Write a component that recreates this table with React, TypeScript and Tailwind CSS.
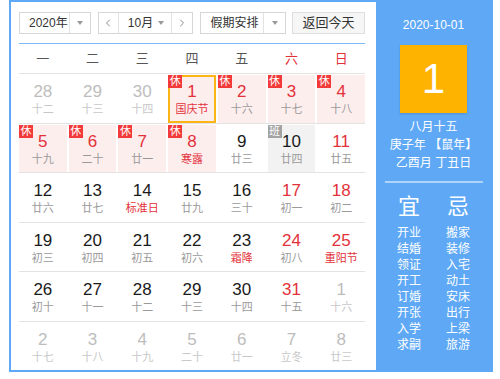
import React from 'react';
import { ChevronLeft, ChevronRight } from 'lucide-react';

type Day = {
  n: number;
  lunar: string;
  kind?: 'other' | 'red' | 'normal';
  lunarRed?: boolean;
  badge?: '休' | '班';
  today?: boolean;
};

const WEEK = ['一', '二', '三', '四', '五', '六', '日'];

const ROWS: Day[][] = [
  [
    { n: 28, lunar: '十二', kind: 'other' },
    { n: 29, lunar: '十三', kind: 'other' },
    { n: 30, lunar: '十四', kind: 'other' },
    { n: 1, lunar: '国庆节', kind: 'red', lunarRed: true, badge: '休', today: true },
    { n: 2, lunar: '十六', kind: 'red', badge: '休' },
    { n: 3, lunar: '十七', kind: 'red', badge: '休' },
    { n: 4, lunar: '十八', kind: 'red', badge: '休' },
  ],
  [
    { n: 5, lunar: '十九', kind: 'red', badge: '休' },
    { n: 6, lunar: '二十', kind: 'red', badge: '休' },
    { n: 7, lunar: '廿一', kind: 'red', badge: '休' },
    { n: 8, lunar: '寒露', kind: 'red', lunarRed: true, badge: '休' },
    { n: 9, lunar: '廿三' },
    { n: 10, lunar: '廿四', badge: '班' },
    { n: 11, lunar: '廿五', kind: 'red' },
  ],
  [
    { n: 12, lunar: '廿六' },
    { n: 13, lunar: '廿七' },
    { n: 14, lunar: '标准日', lunarRed: true },
    { n: 15, lunar: '廿九' },
    { n: 16, lunar: '三十' },
    { n: 17, lunar: '初一', kind: 'red' },
    { n: 18, lunar: '初二', kind: 'red' },
  ],
  [
    { n: 19, lunar: '初三' },
    { n: 20, lunar: '初四' },
    { n: 21, lunar: '初五' },
    { n: 22, lunar: '初六' },
    { n: 23, lunar: '霜降', lunarRed: true },
    { n: 24, lunar: '初八', kind: 'red' },
    { n: 25, lunar: '重阳节', kind: 'red', lunarRed: true },
  ],
  [
    { n: 26, lunar: '初十' },
    { n: 27, lunar: '十一' },
    { n: 28, lunar: '十二' },
    { n: 29, lunar: '十三' },
    { n: 30, lunar: '十四' },
    { n: 31, lunar: '十五', kind: 'red' },
    { n: 1, lunar: '十六', kind: 'other' },
  ],
  [
    { n: 2, lunar: '十七', kind: 'other' },
    { n: 3, lunar: '十八', kind: 'other' },
    { n: 4, lunar: '十九', kind: 'other' },
    { n: 5, lunar: '二十', kind: 'other' },
    { n: 6, lunar: '廿一', kind: 'other' },
    { n: 7, lunar: '立冬', kind: 'other' },
    { n: 8, lunar: '廿三', kind: 'other' },
  ],
];

const YI = ['开业', '结婚', '领证', '开工', '订婚', '开张', '入学', '求嗣'];
const JI = ['搬家', '装修', '入宅', '动土', '安床', '出行', '上梁', '旅游'];

const Arrow = () => (
  <span className="h-0 w-0 border-x-[3px] border-t-[4px] border-x-transparent border-t-[#9a9a9a]" />
);

const Cell = ({ d }: { d: Day }) => {
  const bg = d.badge === '休' ? 'bg-[#fdeeee]' : d.badge === '班' ? 'bg-[#f2f2f2]' : '';
  const num =
    d.kind === 'other' ? 'text-[#bdbdbd]' : d.kind === 'red' ? 'text-[#e3313a]' : 'text-[#1a1a1a]';
  const lunar = d.kind === 'other'
    ? 'text-[#c8c8c8]'
    : d.lunarRed
      ? 'text-[#e3313a]'
      : 'text-[#9a9a9a]';

  return (
    <div
      className={`relative flex flex-col items-center ${bg} ${
        d.today ? 'border-2 border-[#fdb515] pt-[5px]' : 'pt-[7px]'
      }`}
    >
      {d.badge && (
        <span
          className={`absolute ${d.today ? '-left-[2px] -top-[2px]' : 'left-0 top-0'} h-[13px] w-[14px] text-center text-[11px] leading-[13px] text-white ${
            d.badge === '休' ? 'bg-[#f23a3a]' : 'bg-[#a3a3a3]'
          }`}
        >
          {d.badge}
        </span>
      )}
      <span className={`text-[17px] leading-[20px] ${num}`}>{d.n}</span>
      <span className={`text-[11px] leading-[14px] ${lunar}`}>{d.lunar}</span>
    </div>
  );
};

export default function App() {
  return (
    <div
      className="h-[379px] w-[500px] bg-white pl-[9px]"
      style={{ fontFamily: '"Liberation Sans", "Noto Sans CJK SC", sans-serif' }}
    >
      <div className="flex h-[372px] w-[484px] border-2 border-[#5ea8f5]">
        {/* calendar */}
        <div className="flex w-[365px] flex-col pl-[8px] pr-[11px] pt-[10px]">
          <div className="flex h-[22px] items-stretch text-[12px] text-[#333]">
            <div className="flex w-[72px] border border-[#d6d6d6] bg-white">
              <span className="flex flex-1 items-center pl-[9px]">2020年</span>
              <span className="flex w-[21px] items-center justify-center border-l border-[#e2e2e2]">
                <Arrow />
              </span>
            </div>
            <div className="ml-[7px] flex w-[96px] border border-[#d6d6d6] bg-white">
              <span className="flex w-[20px] items-center justify-center border-r border-[#e2e2e2]">
                <ChevronLeft size={12} strokeWidth={1.5} className="text-[#666]" />
              </span>
              <span className="flex flex-1 items-center justify-between pl-[9px] pr-[7px]">
                10月
                <Arrow />
              </span>
              <span className="flex w-[21px] items-center justify-center border-l border-[#e2e2e2]">
                <ChevronRight size={12} strokeWidth={1.5} className="text-[#666]" />
              </span>
            </div>
            <div className="ml-[7px] flex w-[86px] border border-[#d6d6d6] bg-white">
              <span className="flex flex-1 items-center pl-[9px]">假期安排</span>
              <span className="flex w-[22px] items-center justify-center border-l border-[#e2e2e2]">
                <Arrow />
              </span>
            </div>
            <div className="ml-[6px] flex w-[73px] items-center justify-center border border-[#dedede] bg-[#f6f6f6] text-[13px]">
              返回今天
            </div>
          </div>

          <div className="mt-[9px] border-t border-[#7db9f6]" />

          <div className="grid h-[29px] grid-cols-7 gap-x-[2px] items-center text-center text-[13px]">
            {WEEK.map((w, i) => (
              <span key={w} className={i >= 5 ? 'text-[#e3313a]' : 'text-[#555]'}>
                {w}
              </span>
            ))}
          </div>

          <div className="flex flex-1 flex-col border-t border-[#e3e3e3]">
            {ROWS.map((row, ri) => (
              <div
                key={ri}
                className={`grid flex-1 grid-cols-7 gap-x-[2px] pt-px ${
                  ri < ROWS.length - 1 ? 'border-b border-[#e3e3e3]' : ''
                }`}
              >
                {row.map((d, ci) => (
                  <Cell key={ci} d={d} />
                ))}
              </div>
            ))}
          </div>
        </div>

        {/* side panel */}
        <div className="flex flex-1 flex-col items-center bg-[#5ea8f5] pt-[15px] text-white">
          <div className="text-[12px] leading-[16px]">2020-10-01</div>
          <div className="mt-[12px] flex h-[68px] w-[67px] items-center justify-center bg-[#fdb300] shadow-[0_1px_2px_rgba(0,0,0,0.15)]">
            <span className="text-[42px] leading-none">1</span>
          </div>
          <div className="mt-[5px] flex flex-col items-center text-[12px] leading-[18px]">
            <span>八月十五</span>
            <span>庚子年 【鼠年】</span>
            <span>乙酉月 丁丑日</span>
          </div>
          <div className="mt-[9px] h-[2px] w-[98px] bg-white/50" />
          <div className="mt-[11px] grid w-[98px] grid-cols-2 text-center">
            <span className="text-[22px] leading-[26px]">宜</span>
            <span className="text-[22px] leading-[26px]">忌</span>
            <div className="mt-[5px] flex flex-col text-[12px] leading-[16px]">
              {YI.map((t) => (
                <span key={t}>{t}</span>
              ))}
            </div>
            <div className="mt-[5px] flex flex-col text-[12px] leading-[16px]">
              {JI.map((t) => (
                <span key={t}>{t}</span>
              ))}
            </div>
          </div>
        </div>
      </div>
    </div>
  );
}
